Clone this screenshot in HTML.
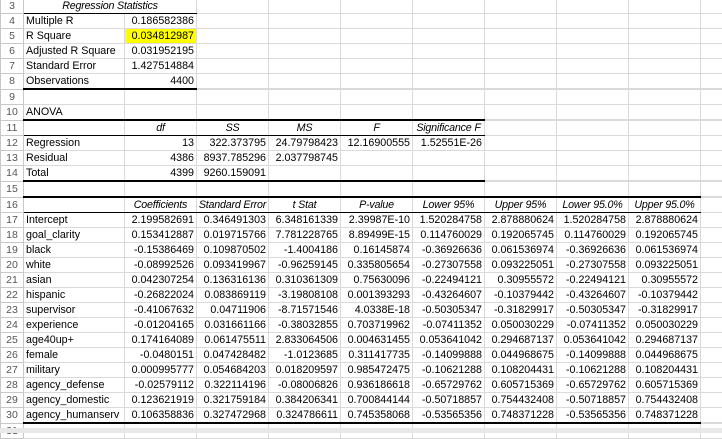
<!DOCTYPE html>
<html><head><meta charset="utf-8"><style>
body{margin:0;width:722px;height:433px;overflow:hidden;background:#fff;position:relative;font-family:"Liberation Sans",Arial,sans-serif}
table{position:absolute;left:0;top:-2px;width:722px;border-collapse:collapse;table-layout:fixed}
td{height:14px;padding:0 2px;font-size:10.7px;line-height:14px;white-space:nowrap;overflow:hidden;border:1px solid #dadada;color:#000;text-align:right}
td.h{color:#555;text-align:center;border-color:#c8c8c8;font-size:10.5px;padding:0}
td.l{text-align:left}
td.c{text-align:center;font-style:italic;padding:0;letter-spacing:-0.2px}
tr.tt td:not(.h){border-top:2px solid #000}
tr.bb td:not(.h){border-bottom:2px solid #000}
tr.bt td:not(.h){border-bottom:1px solid #000}
td.n{border-top-color:#dadada!important;border-bottom-color:#dadada!important}
.sb{position:absolute;left:0;top:428px;width:722px;height:5px;background:#e8e8e8}
</style></head><body>
<table>
<colgroup><col style="width:23px"><col style="width:101px"><col style="width:72px"><col style="width:72px"><col style="width:72px"><col style="width:72px"><col style="width:72px"><col style="width:72px"><col style="width:72px"><col style="width:72px"><col style="width:22px"></colgroup>
<tr class="bt"><td class="h">3</td><td class="c" colspan="2">Regression Statistics</td><td class="n"></td><td class="n"></td><td class="n"></td><td class="n"></td><td class="n"></td><td class="n"></td><td class="n"></td><td class="n"></td></tr>
<tr><td class="h">4</td><td class="l">Multiple R</td><td>0.186582386</td><td></td><td></td><td></td><td></td><td></td><td></td><td></td><td></td></tr>
<tr><td class="h">5</td><td class="l">R Square</td><td style="background:#ffff00">0.034812987</td><td></td><td></td><td></td><td></td><td></td><td></td><td></td><td></td></tr>
<tr><td class="h">6</td><td class="l">Adjusted R Square</td><td>0.031952195</td><td></td><td></td><td></td><td></td><td></td><td></td><td></td><td></td></tr>
<tr><td class="h">7</td><td class="l">Standard Error</td><td>1.427514884</td><td></td><td></td><td></td><td></td><td></td><td></td><td></td><td></td></tr>
<tr class="bb"><td class="h">8</td><td class="l">Observations</td><td>4400</td><td class="n"></td><td class="n"></td><td class="n"></td><td class="n"></td><td class="n"></td><td class="n"></td><td class="n"></td><td class="n"></td></tr>
<tr><td class="h">9</td><td></td><td></td><td></td><td></td><td></td><td></td><td></td><td></td><td></td><td></td></tr>
<tr><td class="h">10</td><td class="l">ANOVA</td><td></td><td></td><td></td><td></td><td></td><td></td><td></td><td></td><td></td></tr>
<tr class="tt bt"><td class="h">11</td><td></td><td class="c">df</td><td class="c">SS</td><td class="c">MS</td><td class="c">F</td><td class="c">Significance F</td><td class="n"></td><td class="n"></td><td class="n"></td><td class="n"></td></tr>
<tr><td class="h">12</td><td class="l">Regression</td><td>13</td><td>322.373795</td><td>24.79798423</td><td>12.16900555</td><td>1.52551E-26</td><td></td><td></td><td></td><td></td></tr>
<tr><td class="h">13</td><td class="l">Residual</td><td>4386</td><td>8937.785296</td><td>2.037798745</td><td></td><td></td><td></td><td></td><td></td><td></td></tr>
<tr class="bb"><td class="h">14</td><td class="l">Total</td><td>4399</td><td>9260.159091</td><td></td><td></td><td></td><td class="n"></td><td class="n"></td><td class="n"></td><td class="n"></td></tr>
<tr><td class="h">15</td><td></td><td></td><td></td><td></td><td></td><td></td><td></td><td></td><td></td><td></td></tr>
<tr class="tt bt"><td class="h">16</td><td></td><td class="c">Coefficients</td><td class="c">Standard Error</td><td class="c">t Stat</td><td class="c">P-value</td><td class="c">Lower 95%</td><td class="c">Upper 95%</td><td class="c">Lower 95.0%</td><td class="c">Upper 95.0%</td><td class="n"></td></tr>
<tr><td class="h">17</td><td class="l">Intercept</td><td>2.199582691</td><td>0.346491303</td><td>6.348161339</td><td>2.39987E-10</td><td>1.520284758</td><td>2.878880624</td><td>1.520284758</td><td>2.878880624</td><td></td></tr>
<tr><td class="h">18</td><td class="l">goal_clarity</td><td>0.153412887</td><td>0.019715766</td><td>7.781228765</td><td>8.89499E-15</td><td>0.114760029</td><td>0.192065745</td><td>0.114760029</td><td>0.192065745</td><td></td></tr>
<tr><td class="h">19</td><td class="l">black</td><td>-0.15386469</td><td>0.109870502</td><td>-1.4004186</td><td>0.16145874</td><td>-0.36926636</td><td>0.061536974</td><td>-0.36926636</td><td>0.061536974</td><td></td></tr>
<tr><td class="h">20</td><td class="l">white</td><td>-0.08992526</td><td>0.093419967</td><td>-0.96259145</td><td>0.335805654</td><td>-0.27307558</td><td>0.093225051</td><td>-0.27307558</td><td>0.093225051</td><td></td></tr>
<tr><td class="h">21</td><td class="l">asian</td><td>0.042307254</td><td>0.136316136</td><td>0.310361309</td><td>0.75630096</td><td>-0.22494121</td><td>0.30955572</td><td>-0.22494121</td><td>0.30955572</td><td></td></tr>
<tr><td class="h">22</td><td class="l">hispanic</td><td>-0.26822024</td><td>0.083869119</td><td>-3.19808108</td><td>0.001393293</td><td>-0.43264607</td><td>-0.10379442</td><td>-0.43264607</td><td>-0.10379442</td><td></td></tr>
<tr><td class="h">23</td><td class="l">supervisor</td><td>-0.41067632</td><td>0.04711906</td><td>-8.71571546</td><td>4.0338E-18</td><td>-0.50305347</td><td>-0.31829917</td><td>-0.50305347</td><td>-0.31829917</td><td></td></tr>
<tr><td class="h">24</td><td class="l">experience</td><td>-0.01204165</td><td>0.031661166</td><td>-0.38032855</td><td>0.703719962</td><td>-0.07411352</td><td>0.050030229</td><td>-0.07411352</td><td>0.050030229</td><td></td></tr>
<tr><td class="h">25</td><td class="l">age40up+</td><td>0.174164089</td><td>0.061475511</td><td>2.833064506</td><td>0.004631455</td><td>0.053641042</td><td>0.294687137</td><td>0.053641042</td><td>0.294687137</td><td></td></tr>
<tr><td class="h">26</td><td class="l">female</td><td>-0.0480151</td><td>0.047428482</td><td>-1.0123685</td><td>0.311417735</td><td>-0.14099888</td><td>0.044968675</td><td>-0.14099888</td><td>0.044968675</td><td></td></tr>
<tr><td class="h">27</td><td class="l">military</td><td>0.000995777</td><td>0.054684203</td><td>0.018209597</td><td>0.985472475</td><td>-0.10621288</td><td>0.108204431</td><td>-0.10621288</td><td>0.108204431</td><td></td></tr>
<tr><td class="h">28</td><td class="l">agency_defense</td><td>-0.02579112</td><td>0.322114196</td><td>-0.08006826</td><td>0.936186618</td><td>-0.65729762</td><td>0.605715369</td><td>-0.65729762</td><td>0.605715369</td><td></td></tr>
<tr><td class="h">29</td><td class="l">agency_domestic</td><td>0.123621919</td><td>0.321759184</td><td>0.384206341</td><td>0.700844144</td><td>-0.50718857</td><td>0.754432408</td><td>-0.50718857</td><td>0.754432408</td><td></td></tr>
<tr class="bb"><td class="h">30</td><td class="l">agency_humanserv</td><td>0.106358836</td><td>0.327472968</td><td>0.324786611</td><td>0.745358068</td><td>-0.53565356</td><td>0.748371228</td><td>-0.53565356</td><td>0.748371228</td><td class="n"></td></tr>
<tr><td class="h">31</td><td></td><td></td><td></td><td></td><td></td><td></td><td></td><td></td><td></td><td></td></tr>
</table>
<div class="sb"></div>
</body></html>
